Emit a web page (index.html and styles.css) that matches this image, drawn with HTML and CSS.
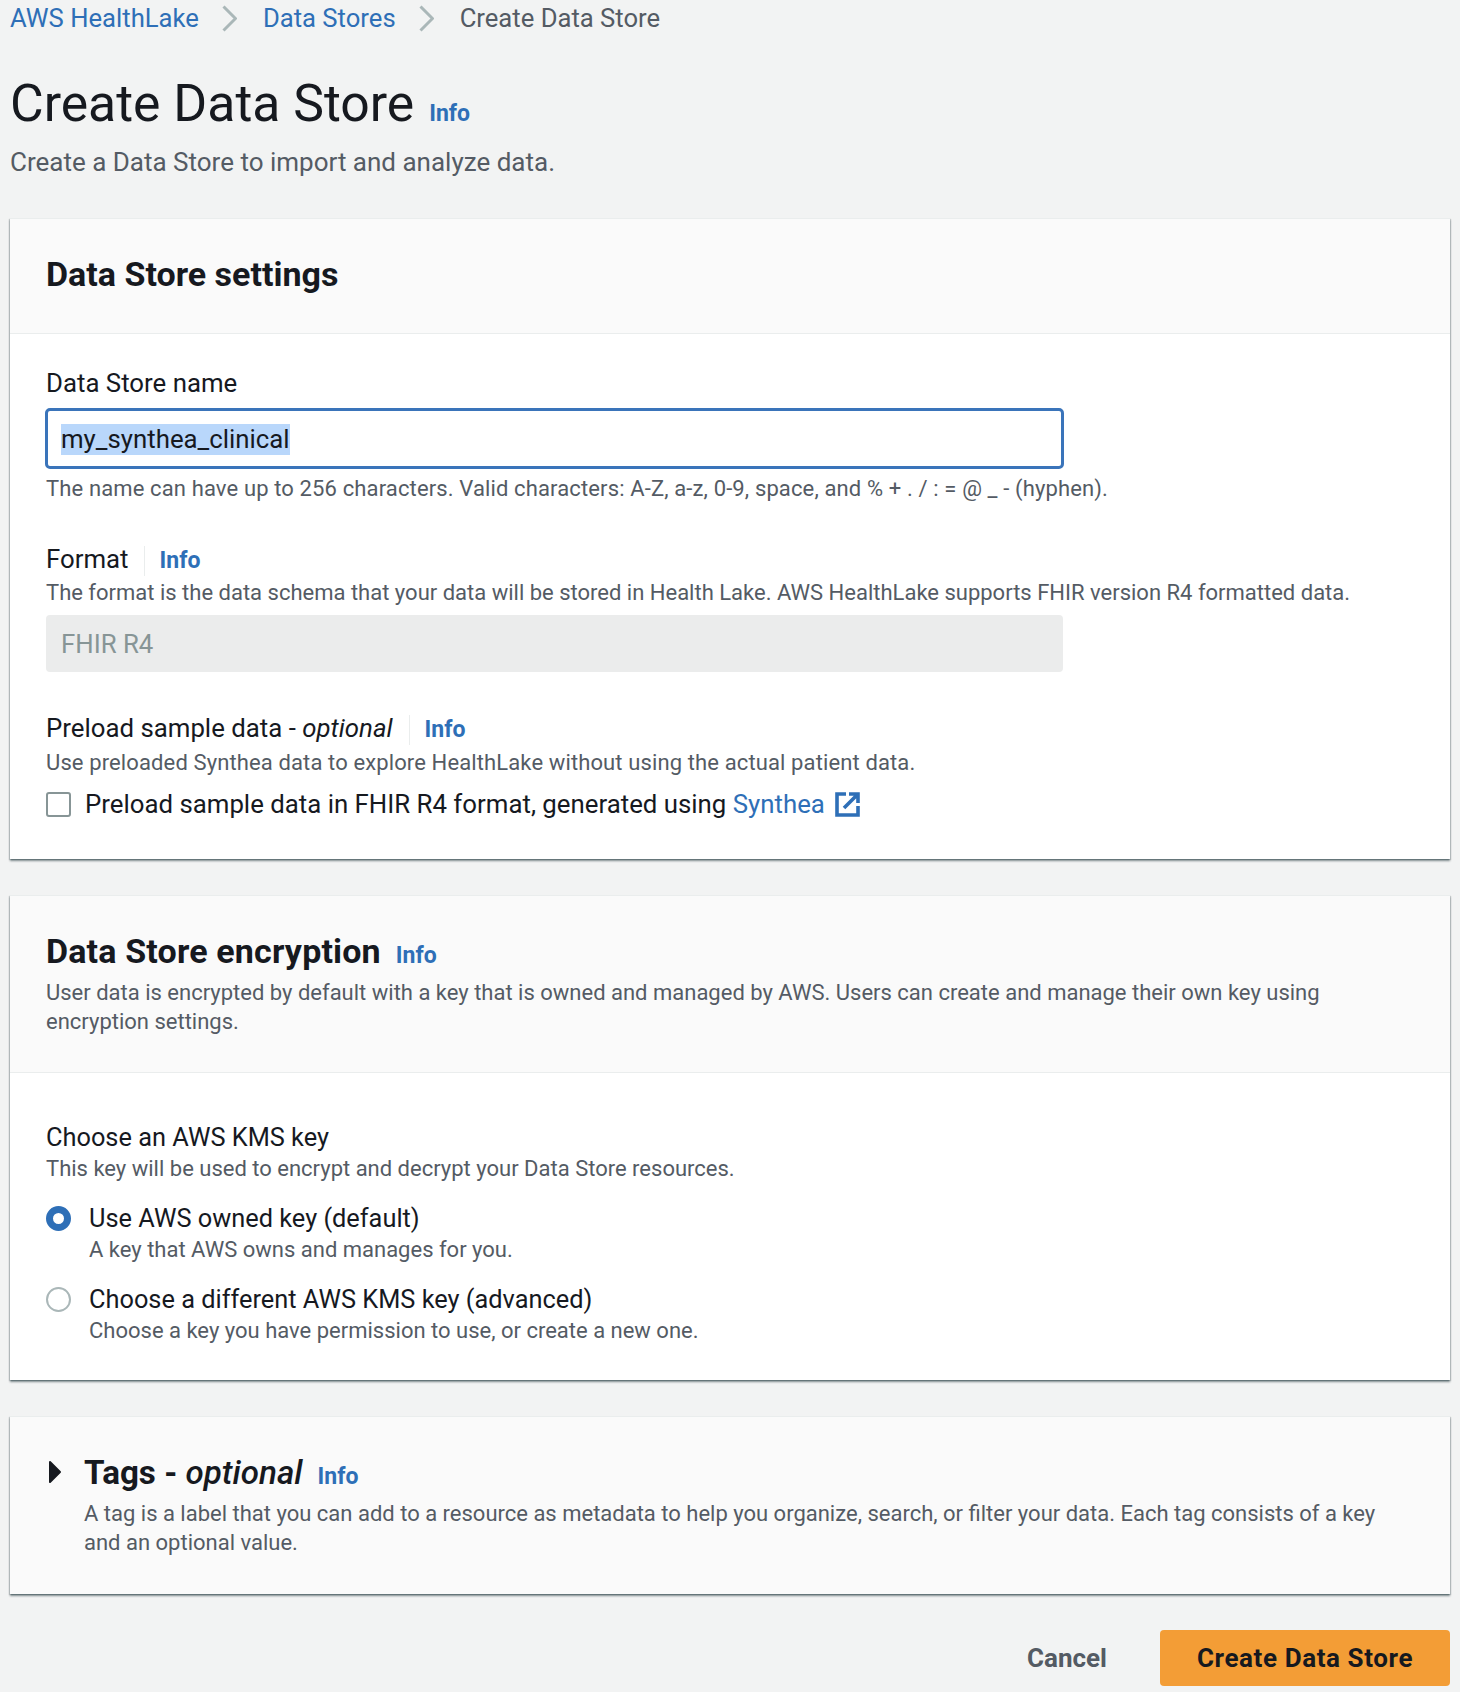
FILE: index.html
```html
<!DOCTYPE html>
<html lang="en">
<head>
<meta charset="utf-8">
<title>Create Data Store</title>
<link rel="stylesheet" href="styles.css">
</head>
<body>
<nav class="crumbs">
  <a class="crumb-link">AWS HealthLake</a>
  <svg class="chev" viewBox="0 0 15 27"><path d="M1.500 1.500l12 12-12 12"/></svg>
  <a class="crumb-link">Data Stores</a>
  <svg class="chev" viewBox="0 0 15 27"><path d="M1.500 1.500l12 12-12 12"/></svg>
  <span class="crumb-current">Create Data Store</span>
</nav>
<header class="page-head">
  <div class="title-row"><h1>Create Data Store</h1><a class="info">Info</a></div>
  <p class="subtitle">Create a Data Store to import and analyze data.</p>
</header>

<section class="card">
  <div class="card-head plain"><h2>Data Store settings</h2></div>
  <div class="card-body first-body">
    <div class="label">Data Store name</div>
    <div class="input focused"><span class="selected">my_synthea_clinical</span></div>
    <p class="hint after-input">The name can have up to 256 characters. Valid characters: A-Z, a-z, 0-9, space, and % + . / : = @ _ - (hyphen).</p>

    <div class="label-row format-row"><span class="label">Format</span><a class="info divided">Info</a></div>
    <p class="hint">The format is the data schema that your data will be stored in Health Lake. AWS HealthLake supports FHIR version R4 formatted data.</p>
    <div class="input disabled">FHIR R4</div>

    <div class="label-row preload-row"><span class="label">Preload sample data - <em>optional</em></span><a class="info divided">Info</a></div>
    <p class="hint preload-hint">Use preloaded Synthea data to explore HealthLake without using the actual patient data.</p>
    <div class="check-row">
      <span class="checkbox"></span>
      <span class="label">Preload sample data in FHIR R4 format, generated using <a class="link">Synthea</a></span>
      <svg class="ext" viewBox="0 0 25 25"><path d="M11 2H2v21h21v-9M14 2h9v9M23 2L9 16"/></svg>
    </div>
  </div>
</section>

<section class="card">
  <div class="card-head desc-head">
    <div class="title-row small"><h2 class="wide-title">Data Store encryption</h2><a class="info">Info</a></div>
    <p class="hint head-text">User data is encrypted by default with a key that is owned and managed by AWS. Users can create and manage their own key using encryption settings.</p>
  </div>
  <div class="card-body second-body">
    <div class="label narrow">Choose an AWS KMS key</div>
    <p class="hint kms-hint">This key will be used to encrypt and decrypt your Data Store resources.</p>
    <div class="radio-row first-radio">
      <span class="radio on"></span>
      <div><div class="label narrow">Use AWS owned key (default)</div><p class="hint">A key that AWS owns and manages for you.</p></div>
    </div>
    <div class="radio-row">
      <span class="radio"></span>
      <div><div class="label narrow">Choose a different AWS KMS key (advanced)</div><p class="hint">Choose a key you have permission to use, or create a new one.</p></div>
    </div>
  </div>
</section>

<section class="card tags">
  <svg class="caret" viewBox="0 0 14 24"><path d="M2 2l10 10L2 22z"/></svg>
  <div class="tags-main">
    <div class="title-row small"><h2 class="tags-title">Tags - <em>optional</em></h2><a class="info">Info</a></div>
    <p class="hint head-text tags-text">A tag is a label that you can add to a resource as metadata to help you organize, search, or filter your data. Each tag consists of a key and an optional value.</p>
  </div>
</section>

<footer class="actions">
  <button class="btn-cancel">Cancel</button>
  <button class="btn-primary">Create Data Store</button>
</footer>
</body>
</html>
```
FILE: styles.css
```css
* { box-sizing: border-box; }
html, body { margin: 0; padding: 0; }
body {
  width: 1460px;
  height: 1692px;
  padding: 0 10px;
  overflow: hidden;
  background: #f2f3f3;
  color: #16191f;
  font-family: Roboto, "Liberation Sans", sans-serif;
  font-size: 25.8px;
  line-height: 29px;
}
h1, h2, p { margin: 0; }
a { color: #2e6fb7; }
em { font-style: italic; }

.crumbs { display: flex; align-items: center; height: 36px; font-size: 25.65px; }
.crumb-link { color: #2e6fb7; }
.crumb-current { color: #545b64; }
.chev { width: 15px; height: 27px; margin: 0 26px 0 23px; flex: none; }
.chev path { fill: none; stroke: #aab7b8; stroke-width: 3; }

.page-head { padding-top: 38px; }
.title-row { display: flex; align-items: baseline; gap: 15px; }
h1 { font-size: 51.7px; line-height: 60px; font-weight: 400; }
.subtitle { margin-top: 14px; color: #545b64; font-size: 26px; }
.info { color: #2e6fb7; font-size: 23px; font-weight: 700; line-height: 29px; }

.card {
  margin-top: 36px;
  background: #fff;
  border-top: 1px solid #eaeded;
  box-shadow: 0 2px 2px 0 rgba(0, 28, 36, .45), 1px 1px 1px 0 rgba(0, 28, 36, .15), -1px 1px 1px 0 rgba(0, 28, 36, .15);
}
.page-head + .card { margin-top: 41px; }
.card-head { background: #fafafa; border-bottom: 1px solid #eaeded; padding: 0 36px; }
.card-head.plain { padding-top: 35px; height: 115px; }
h2 { font-size: 34px; line-height: 40px; font-weight: 700; }
h2 em { font-weight: 500; }
.wide-title { letter-spacing: .16px; }
.tags-title { font-size: 33.2px; }
.desc-head { height: 177px; padding-top: 35px; }
.title-row.small { gap: 15px; }
.head-text { margin-top: 7px; }
.tags-text { margin-top: 6px; }
.card-body { padding: 0 36px; }
.first-body { padding-top: 35px; height: 525px; }
.second-body { padding-top: 50px; height: 307px; }

.label { font-size: 25.8px; line-height: 29px; }
.label.narrow { font-size: 25.35px; }
.hint { color: #545b64; font-size: 22px; line-height: 29px; }
.preload-hint { letter-spacing: .12px; }
.input {
  width: 1017px;
  border-radius: 4px;
  font-size: 25.8px;
}
.focused {
  width: 1019px;
  height: 61px;
  margin: 10px 0 0 -1px;
  padding: 13px 13px;
  border: 3px solid #3a74ba;
  border-radius: 5px;
  line-height: 29px;
}
.selected { display: inline-block; background: #b9d7fb; line-height: 31px; }
.disabled {
  height: 57px;
  margin-top: 8px;
  padding: 15px 15px;
  background: #ebecec;
  color: #879596;
}
.after-input { margin-top: 5px; letter-spacing: .13px; }
.label-row { display: flex; align-items: center; height: 30px; }
.label-row .info { position: relative; top: 2px; }
.divided {
  margin-left: 15px;
  padding-left: 15px;
  border-left: 1px solid #eaeded;
  line-height: 30px;
}
.format-row { margin-top: 41px; margin-bottom: 4px; }
.preload-row { margin-top: 41px; margin-bottom: 5px; }
.preload-row .divided { margin-left: 16px; }
.check-row { display: flex; align-items: center; margin-top: 13px; height: 29px; }
.checkbox {
  width: 25px;
  height: 25px;
  flex: none;
  margin-right: 14px;
  border: 2px solid #879596;
  border-radius: 3px;
  background: #fff;
}
.ext { width: 25px; height: 25px; margin-left: 10px; flex: none; }
.ext path { fill: none; stroke: #2e6fb7; stroke-width: 3.6; }

.kms-hint { margin-top: 2px; }
.radio-row { display: flex; margin-top: 23px; }
.first-radio { margin-top: 21px; }
.radio-row + .radio-row { margin-top: 21px; }
.radio {
  width: 25px;
  height: 25px;
  flex: none;
  margin: 2px 18px 0 0;
  border: 2px solid #aab7b8;
  border-radius: 50%;
  background: #fff;
}
.radio.on { border: 7.5px solid #2e6fb7; }
.radio-row .hint { margin-top: 2px; }

.tags { display: flex; align-items: flex-start; height: 178px; margin-top: 36px; background: #fafafa; padding: 36px 36px 0 38px; }
.caret { width: 14px; height: 24px; flex: none; margin: 7px 22px 0 0; }
.caret path { fill: #16191f; stroke: #16191f; stroke-width: 2; stroke-linejoin: round; }

.actions { display: flex; justify-content: flex-end; align-items: center; gap: 53px; margin-top: 36px; }
.btn-cancel, .btn-primary {
  font-family: inherit;
  font-size: 26px;
  font-weight: 700;
  border: 0;
  background: none;
  padding: 0;
}
.btn-cancel { color: #545b64; }
.btn-primary {
  width: 290px;
  height: 56px;
  border-radius: 4px;
  background: #f39d36;
  color: #16191f;
  letter-spacing: .6px;
}
```
